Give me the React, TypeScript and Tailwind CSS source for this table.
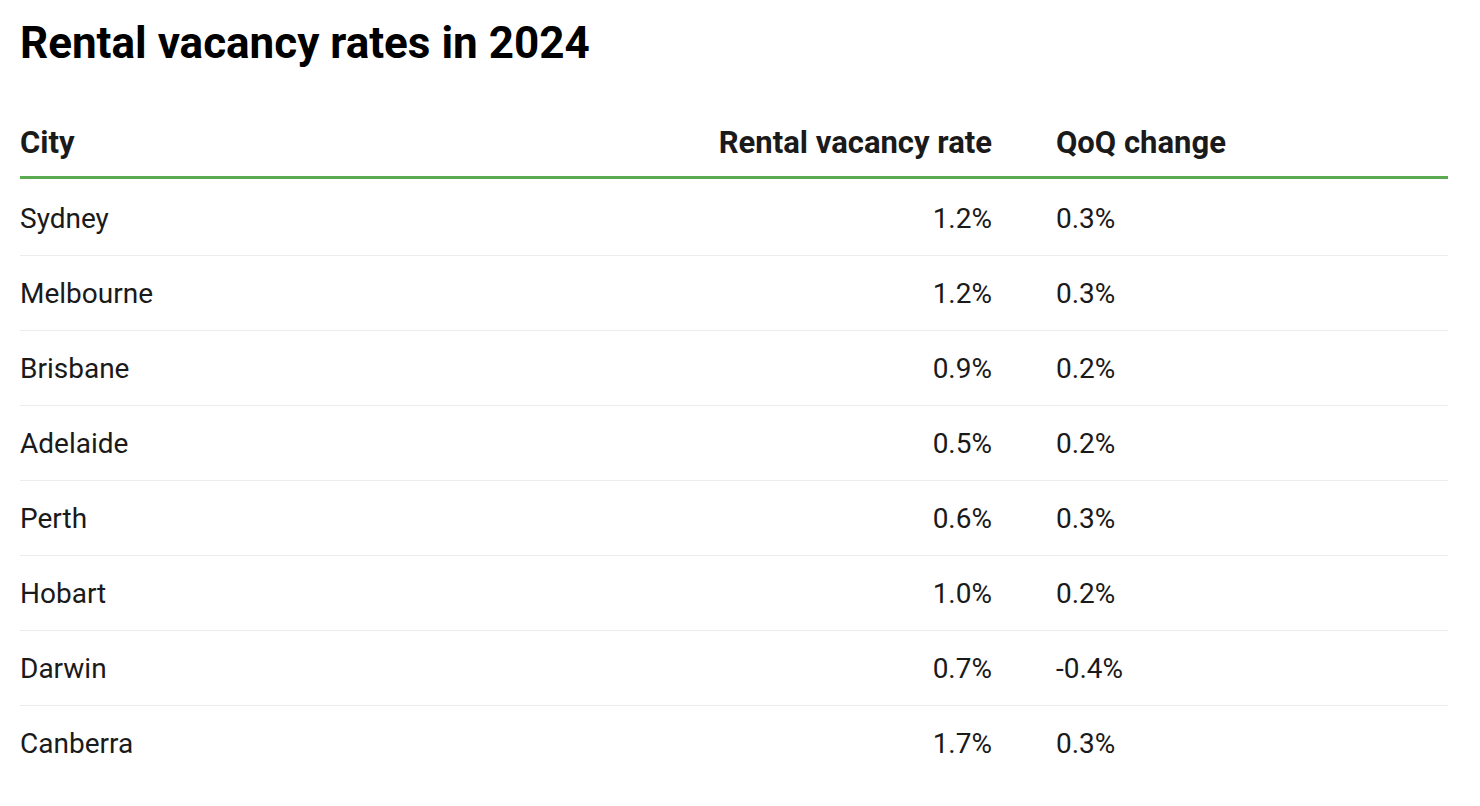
const rows = [
  { city: "Sydney", rate: "1.2%", change: "0.3%" },
  { city: "Melbourne", rate: "1.2%", change: "0.3%" },
  { city: "Brisbane", rate: "0.9%", change: "0.2%" },
  { city: "Adelaide", rate: "0.5%", change: "0.2%" },
  { city: "Perth", rate: "0.6%", change: "0.3%" },
  { city: "Hobart", rate: "1.0%", change: "0.2%" },
  { city: "Darwin", rate: "0.7%", change: "-0.4%" },
  { city: "Canberra", rate: "1.7%", change: "0.3%" },
];

export default function App() {
  return (
    <div className="min-h-screen bg-white px-5 pt-[16px] font-['Roboto','Liberation_Sans',sans-serif] text-[#1a1a1a]">
      <h1 className="text-[44px] leading-[54px] font-bold text-black">Rental vacancy rates in 2024</h1>

      <table className="mt-[51px] w-[1428px] border-collapse">
        <thead>
          <tr className="border-b-[3px] border-[#5aab52]">
            <th className="pb-[11px] text-left text-[31px] leading-[44px] font-bold">City</th>
            <th className="w-[400px] pb-[11px] pr-8 text-right text-[31px] leading-[44px] font-bold">
              Rental vacancy rate
            </th>
            <th className="w-[424px] pb-[11px] pl-8 text-left text-[31px] leading-[44px] font-bold">QoQ change</th>
          </tr>
        </thead>
        <tbody>
          {rows.map((r, i) => {
            // first row also carries the green border in collapse mode
            const cell = i === 0 ? "h-[78px] pt-[4px]" : "h-[75px] pt-[2px]";
            return (
              <tr key={r.city} className={i < rows.length - 1 ? "border-b border-[#ececec]" : ""}>
                <td className={`${cell} text-left text-[28px] leading-[42px]`}>{r.city}</td>
                <td className={`${cell} pr-8 text-right text-[28px] leading-[42px]`}>{r.rate}</td>
                <td className={`${cell} pl-8 text-left text-[28px] leading-[42px]`}>{r.change}</td>
              </tr>
            );
          })}
        </tbody>
      </table>
    </div>
  );
}
